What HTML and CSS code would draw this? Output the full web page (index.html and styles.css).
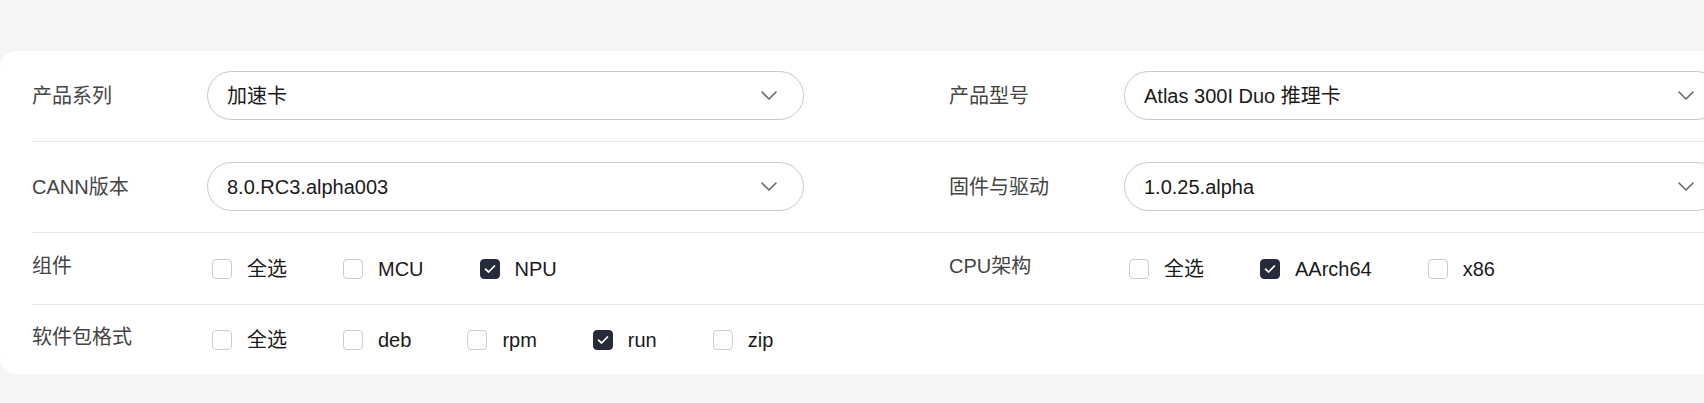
FILE: index.html
```html
<!DOCTYPE html>
<html lang="zh-CN">
<head>
<meta charset="utf-8">
<title>CANN 下载筛选</title>
<link rel="stylesheet" href="styles.css">
</head>
<body>
<div class="page">
  <div class="card">
    <div class="row row-select">
      <div class="field">
        <div class="label">产品系列</div>
        <div class="select"><span class="select-text">加速卡</span>
          <svg class="chev" width="16" height="9" viewBox="0 0 16 9"><path d="M1 1 L8 8 L15 1" fill="none" stroke="#666" stroke-width="1.6" stroke-linecap="round" stroke-linejoin="round"/></svg>
        </div>
      </div>
      <div class="field">
        <div class="label">产品型号</div>
        <div class="select"><span class="select-text">Atlas 300I Duo 推理卡</span>
          <svg class="chev" width="16" height="9" viewBox="0 0 16 9"><path d="M1 1 L8 8 L15 1" fill="none" stroke="#666" stroke-width="1.6" stroke-linecap="round" stroke-linejoin="round"/></svg>
        </div>
      </div>
    </div>
    <div class="row row-select">
      <div class="field">
        <div class="label">CANN版本</div>
        <div class="select"><span class="select-text">8.0.RC3.alpha003</span>
          <svg class="chev" width="16" height="9" viewBox="0 0 16 9"><path d="M1 1 L8 8 L15 1" fill="none" stroke="#666" stroke-width="1.6" stroke-linecap="round" stroke-linejoin="round"/></svg>
        </div>
      </div>
      <div class="field">
        <div class="label">固件与驱动</div>
        <div class="select"><span class="select-text">1.0.25.alpha</span>
          <svg class="chev" width="16" height="9" viewBox="0 0 16 9"><path d="M1 1 L8 8 L15 1" fill="none" stroke="#666" stroke-width="1.6" stroke-linecap="round" stroke-linejoin="round"/></svg>
        </div>
      </div>
    </div>
    <div class="row row-check">
      <div class="field field-top">
        <div class="label">组件</div>
        <div class="checks">
          <label class="check"><span class="box"></span><span class="check-text">全选</span></label>
          <label class="check"><span class="box"></span><span class="check-text">MCU</span></label>
          <label class="check"><span class="box box-on"><svg width="12" height="10" viewBox="0 0 12 10"><path d="M1.5 5.2 L4.6 8 L10.5 2" fill="none" stroke="#fff" stroke-width="1.7" stroke-linecap="round" stroke-linejoin="round"/></svg></span><span class="check-text">NPU</span></label>
        </div>
      </div>
      <div class="field field-top">
        <div class="label">CPU架构</div>
        <div class="checks">
          <label class="check"><span class="box"></span><span class="check-text">全选</span></label>
          <label class="check"><span class="box box-on"><svg width="12" height="10" viewBox="0 0 12 10"><path d="M1.5 5.2 L4.6 8 L10.5 2" fill="none" stroke="#fff" stroke-width="1.7" stroke-linecap="round" stroke-linejoin="round"/></svg></span><span class="check-text">AArch64</span></label>
          <label class="check"><span class="box"></span><span class="check-text">x86</span></label>
        </div>
      </div>
    </div>
    <div class="row row-check row-last">
      <div class="field field-top">
        <div class="label">软件包格式</div>
        <div class="checks">
          <label class="check"><span class="box"></span><span class="check-text">全选</span></label>
          <label class="check"><span class="box"></span><span class="check-text">deb</span></label>
          <label class="check"><span class="box"></span><span class="check-text">rpm</span></label>
          <label class="check"><span class="box box-on"><svg width="12" height="10" viewBox="0 0 12 10"><path d="M1.5 5.2 L4.6 8 L10.5 2" fill="none" stroke="#fff" stroke-width="1.7" stroke-linecap="round" stroke-linejoin="round"/></svg></span><span class="check-text">run</span></label>
          <label class="check"><span class="box"></span><span class="check-text">zip</span></label>
        </div>
      </div>
      <div class="field"></div>
    </div>
  </div>
</div>
</body>
</html>
```
FILE: styles.css
```css
html, body {
  margin: 0;
  padding: 0;
}
body {
  background: #f4f5f7;
  overflow: hidden;
  font-family: "Liberation Sans", "Noto Sans CJK SC", sans-serif;
  font-size: 20px;
  color: #1a1a1a;
}
.page {
  padding-top: 51px;
  width: 1800px;
}
.card {
  width: 1753px;
  box-sizing: border-box;
  background: #ffffff;
  border-radius: 16px;
  padding: 0 32px;
}
.row {
  display: grid;
  grid-template-columns: 772px 772px;
  column-gap: 145px;
  border-bottom: 1px solid #e6e6e6;
}
.row-select {
  padding: 20px 0 21px;
}
.row-check {
  padding: 19px 0 21px;
}
.row-last {
  padding: 18px 0 20px;
  border-bottom: none;
}
.field {
  display: flex;
  align-items: center;
}
.field-top {
  align-items: flex-start;
}
.label {
  width: 175px;
  flex: none;
  color: #444444;
  line-height: 28px;
  white-space: nowrap;
}
.select {
  width: 597px;
  height: 49px;
  box-sizing: border-box;
  border: 1px solid #c9c9c9;
  border-radius: 25px;
  display: flex;
  align-items: center;
  justify-content: space-between;
  padding: 0 26px 0 19px;
}
.select-text {
  color: #1a1a1a;
  line-height: 28px;
}
.chev {
  display: block;
}
.checks {
  display: flex;
  gap: 56px;
  margin-top: 3px;
  padding-left: 5px;
  white-space: nowrap;
}
.check {
  display: flex;
  align-items: center;
  flex: none;
  height: 28px;
}
.box {
  flex: none;
  width: 20px;
  height: 20px;
  box-sizing: border-box;
  border: 1px solid #cccccc;
  border-radius: 4px;
  background: #ffffff;
  display: flex;
  align-items: center;
  justify-content: center;
  margin-right: 15px;
}
.box-on {
  background: #252b3a;
  border-color: #252b3a;
}
.box svg {
  display: block;
}
.check-text {
  color: #1a1a1a;
  line-height: 28px;
}
```
